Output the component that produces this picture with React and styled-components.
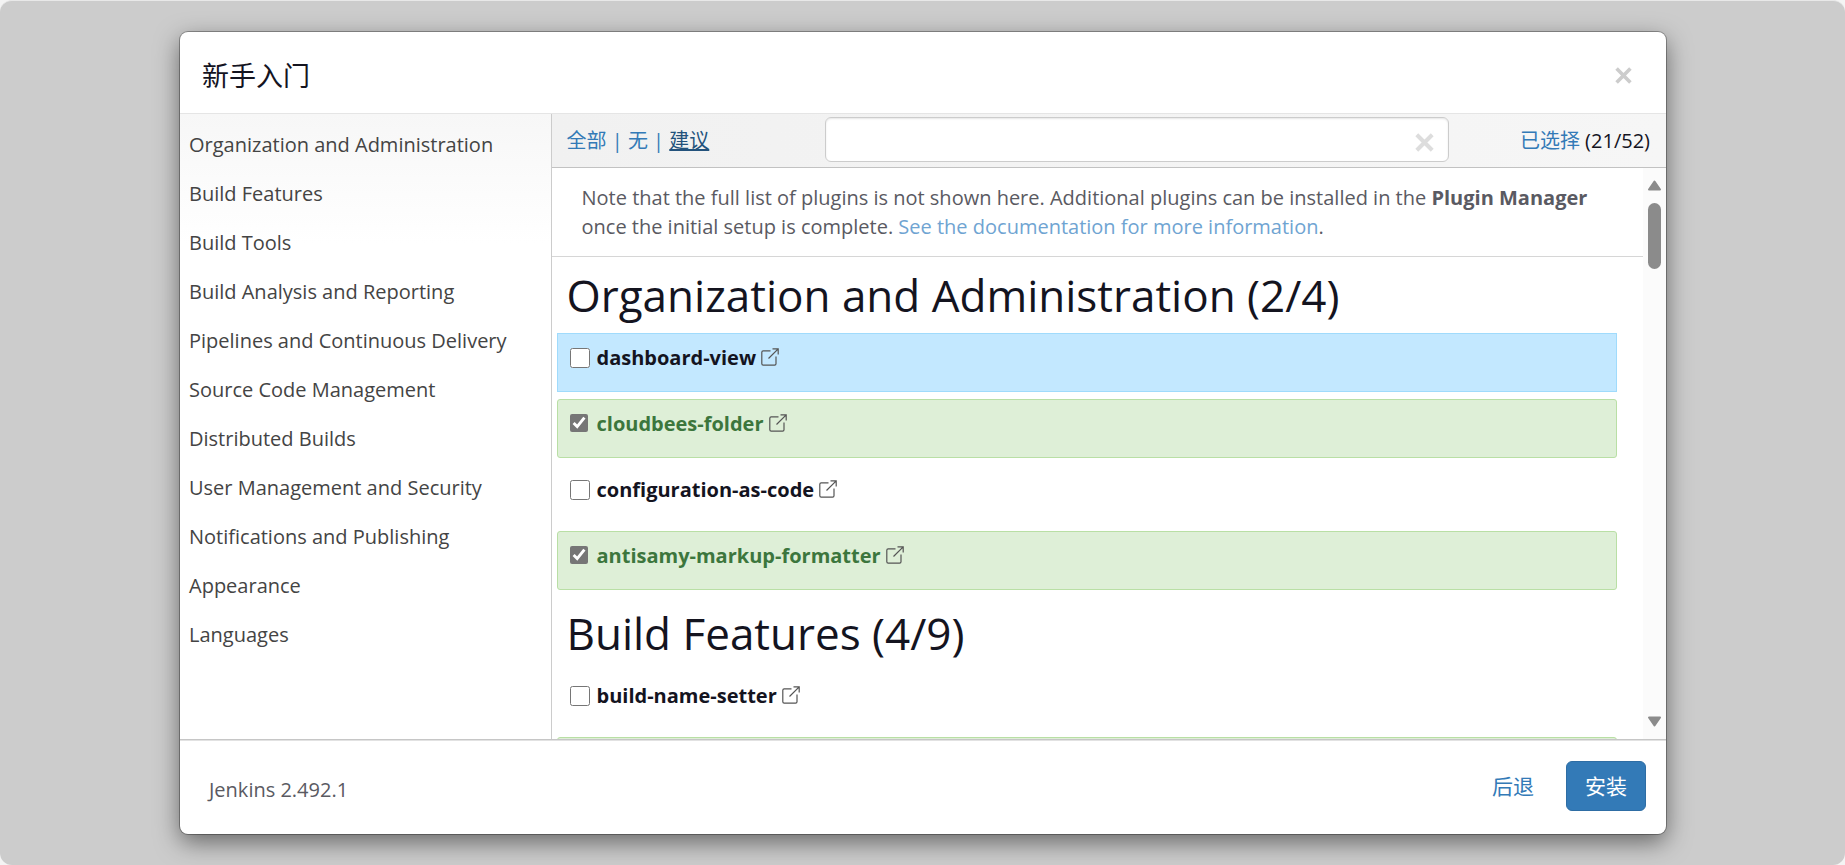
import React from "react";
import styled, { createGlobalStyle, css } from "styled-components";

const GlobalStyle = createGlobalStyle`
  *, *::before, *::after { box-sizing: border-box; }
  body {
    margin: 0;
    background: #f4f4f4;
    color: #14141f;
    font-family: "Open Sans", "Noto Sans CJK SC", sans-serif;
    font-size: 20px;
    line-height: 29px;
  }
`;

const Backdrop = styled.div`
  display: flex;
  height: 100vh;
  min-height: 480px;
  padding: 31px 179px 31px 180px;
  border-top: 1px solid #e8e8e8;
  border-radius: 12px;
  background: #ccc;
`;

const Dialog = styled.section`
  display: flex;
  flex: 1;
  flex-direction: column;
  min-width: 0;
  overflow: hidden;
  border-radius: 8px;
  background: #fff;
  box-shadow: 0 0 0 1px rgba(0, 0, 0, 0.3), 0 8px 24px rgba(0, 0, 0, 0.5);
`;

const Header = styled.header`
  display: flex;
  align-items: center;
  justify-content: space-between;
  height: 82px;
  padding: 6px 34px 0 22px;
  border-bottom: 1px solid #e5e5e5;
`;

const Title = styled.h1`
  margin: 0;
  font-size: 27px;
  font-weight: 400;
  line-height: 38px;
`;

const IconButton = styled.button`
  display: flex;
  padding: 0;
  border: 0;
  background: none;
  color: ${(p) => p.$color};
`;

const Body = styled.div`
  display: flex;
  flex: 1;
  min-height: 0;
  border-bottom: 1px solid #c6c6c6;
`;

const Sidebar = styled.nav`
  flex: 0 0 25%;
  padding: 6px 0 0 9px;
  border-right: 1px solid #ccc;
  background: linear-gradient(#f7f7f7, #fff 130px);
`;

const CategoryList = styled.ul`
  margin: 0;
  padding: 0;
  list-style: none;
`;

const CategoryLink = styled.a`
  display: block;
  padding: 10px 0;
  color: #444;
  text-decoration: none;
`;

const Main = styled.main`
  display: flex;
  flex: 1;
  flex-direction: column;
  min-width: 0;
`;

const Toolbar = styled.div`
  display: flex;
  align-items: center;
  justify-content: space-between;
  height: 54px;
  padding: 0 16px 2px 15px;
  border-bottom: 1px solid #c2c2c2;
  background: linear-gradient(90deg, #f1f1f1, #f6f6f6);
`;

const Filters = styled.div`
  flex: 0 0 258px;
  padding-top: 2px;
  color: #337ab7;
`;

const TextLink = styled.a`
  color: ${(p) => (p.$active ? "#23527c" : "#337ab7")};
  text-decoration: ${(p) => (p.$active ? "underline" : "none")};
`;

const SearchBox = styled.div`
  display: flex;
  flex: 1;
  align-items: center;
  height: 45px;
  padding: 6px 14px 0 16px;
  border: 1px solid #ccc;
  border-radius: 6px;
  background: #fff;
  box-shadow: inset 0 1px 2px rgba(0, 0, 0, 0.1);
`;

const SearchInput = styled.input`
  flex: 1;
  min-width: 0;
  border: 0;
  outline: 0;
  background: none;
  font: inherit;
`;

const Selected = styled.div`
  flex: 0 0 201px;
  padding-top: 2px;
  text-align: right;
`;

const ScrollArea = styled.div`
  display: flex;
  flex: 1;
  min-height: 0;
`;

const PluginPane = styled.div`
  flex: 1;
  min-width: 0;
  overflow: hidden;
`;

const Note = styled.p`
  margin: 0;
  padding: 15px 24px 15px 30px;
  border-bottom: 1px solid #d6d6d6;
  color: #5a5a62;
`;

const NoteLink = styled.a`
  color: #6fa4d2;
  text-decoration: none;
`;

const GroupTitle = styled.h2`
  margin: 0;
  padding: 10px 0 10px 15px;
  font-size: 44px;
  font-weight: 400;
  line-height: 56px;
`;

const PluginList = styled.ul`
  display: flex;
  flex-direction: column;
  gap: 7px;
  margin: 0;
  padding: 0 26px 5px 5px;
  list-style: none;
`;

const PluginRow = styled.li`
  display: flex;
  gap: 5px;
  height: 59px;
  padding: 9px 12px;
  border: 1px solid transparent;
  color: #14141f;
  ${(p) =>
    p.$selected &&
    css`
      border-color: #b9dfa5;
      border-radius: 3px;
      background: #deefd7;
      color: #3c763d;
    `}
  ${(p) =>
    p.$highlighted &&
    css`
      border-color: #a0dbfc;
      background: #c3e8ff;
    `}
`;

const PluginLabel = styled.label`
  display: flex;
  gap: 7px;
  font-weight: 700;
`;

const Checkbox = styled.input`
  width: 20px;
  height: 20px;
  margin: 5px 0 0;
  accent-color: #767676;

  &:checked {
    width: 18px;
    height: 18px;
    margin-right: 2px;
  }
`;

const InfoLink = styled.a`
  display: flex;
  height: 24px;
  padding-top: 5px;
  color: #555;
`;

const Scrollbar = styled.div`
  display: flex;
  flex: 0 0 23px;
  flex-direction: column;
  align-items: center;
  padding: 12px 0;
  background: #fbfbfb;
`;

const ScrollThumb = styled.div`
  width: 13px;
  height: 66px;
  margin: 12px 0 auto;
  border-radius: 7px;
  background: #8b8b8b;
`;

const Footer = styled.footer`
  display: flex;
  align-items: center;
  height: 94px;
  padding: 0 20px 3px 29px;
  border-top: 1px solid #e2e2e2;
`;

const Version = styled.span`
  flex: 1;
  padding-top: 6px;
  color: #5a5a62;
`;

const Button = styled.button`
  height: 50px;
  padding: 0 18px;
  border: 1px solid ${(p) => (p.$primary ? "#2e6da4" : "transparent")};
  border-radius: 6px;
  background: ${(p) => (p.$primary ? "#337ab7" : "transparent")};
  color: ${(p) => (p.$primary ? "#fff" : "#337ab7")};
  font: inherit;
  font-size: 21px;
`;

const FooterActions = styled.div`
  display: flex;
  gap: 13px;
`;

const Cross = ({ size }) => (
  <svg width={size} height={size} viewBox="0 0 16 16" aria-hidden="true">
    <path d="M1.5 1.5 14.5 14.5M14.5 1.5 1.5 14.5" stroke="currentColor" strokeWidth="3.4" />
  </svg>
);

const OpenIcon = () => (
  <svg width="18" height="18" viewBox="0 0 18 18" fill="none" stroke="currentColor" strokeWidth="1.2" aria-hidden="true">
    <path d="M9.5 2.800H2.200Q.8 2.800.8 4.200V15.800Q.8 17.200 2.200 17.200H13.600Q15 17.200 15 15.800V8.500" />
    <path d="M11.500.8H17.200V6.500M17.200.8 7.500 10.500" />
  </svg>
);

const Arrow = ({ down }) => (
  <svg width="15" height="11" viewBox="0 0 15 11" aria-hidden="true">
    <path
      d={down ? "M2 1.500H13L7.500 9.500Z" : "M2 9.500H13L7.500 1.500Z"}
      fill="#8b8b8b"
      stroke="#8b8b8b"
      strokeWidth="2"
      strokeLinejoin="round"
    />
  </svg>
);

const categories = [
  "Organization and Administration",
  "Build Features",
  "Build Tools",
  "Build Analysis and Reporting",
  "Pipelines and Continuous Delivery",
  "Source Code Management",
  "Distributed Builds",
  "User Management and Security",
  "Notifications and Publishing",
  "Appearance",
  "Languages",
];

const groups = [
  {
    title: "Organization and Administration (2/4)",
    plugins: [
      { name: "dashboard-view", highlighted: true },
      { name: "cloudbees-folder", selected: true },
      { name: "configuration-as-code" },
      { name: "antisamy-markup-formatter", selected: true },
    ],
  },
  {
    title: "Build Features (4/9)",
    plugins: [{ name: "build-name-setter" }, { name: "", selected: true }],
  },
];

const Plugin = ({ name, selected, highlighted }) => (
  <PluginRow $selected={selected} $highlighted={highlighted}>
    {name && (
      <>
        <PluginLabel>
          <Checkbox type="checkbox" defaultChecked={selected} />
          {name}
        </PluginLabel>
        <InfoLink href="#" aria-label={name}>
          <OpenIcon />
        </InfoLink>
      </>
    )}
  </PluginRow>
);

export default function App() {
  return (
    <>
      <GlobalStyle />
      <Backdrop>
        <Dialog>
          <Header>
            <Title>新手入门</Title>
            <IconButton $color="#ccc" aria-label="关闭">
              <Cross size={17} />
            </IconButton>
          </Header>
          <Body>
            <Sidebar>
              <CategoryList>
                {categories.map((name) => (
                  <li key={name}>
                    <CategoryLink href="#">{name}</CategoryLink>
                  </li>
                ))}
              </CategoryList>
            </Sidebar>
            <Main>
              <Toolbar>
                <Filters>
                  <TextLink href="#">全部</TextLink> | <TextLink href="#">无</TextLink> |{" "}
                  <TextLink href="#" $active>建议</TextLink>
                </Filters>
                <SearchBox>
                  <SearchInput type="text" aria-label="搜索" />
                  <IconButton $color="#ddd" aria-label="清除">
                    <Cross size={19} />
                  </IconButton>
                </SearchBox>
                <Selected>
                  <TextLink href="#">已选择</TextLink> (21/52)
                </Selected>
              </Toolbar>
              <ScrollArea>
                <PluginPane>
                  <Note>
                    Note that the full list of plugins is not shown here. Additional plugins can be installed in the{" "}
                    <b>Plugin Manager</b> once the initial setup is complete.{" "}
                    <NoteLink href="#">See the documentation for more information</NoteLink>.
                  </Note>
                  {groups.map((group) => (
                    <section key={group.title}>
                      <GroupTitle>{group.title}</GroupTitle>
                      <PluginList>
                        {group.plugins.map((plugin) => (
                          <Plugin key={plugin.name} {...plugin} />
                        ))}
                      </PluginList>
                    </section>
                  ))}
                </PluginPane>
                <Scrollbar>
                  <Arrow />
                  <ScrollThumb />
                  <Arrow down />
                </Scrollbar>
              </ScrollArea>
            </Main>
          </Body>
          <Footer>
            <Version>Jenkins 2.492.1</Version>
            <FooterActions>
              <Button>后退</Button>
              <Button $primary>安装</Button>
            </FooterActions>
          </Footer>
        </Dialog>
      </Backdrop>
    </>
  );
}
